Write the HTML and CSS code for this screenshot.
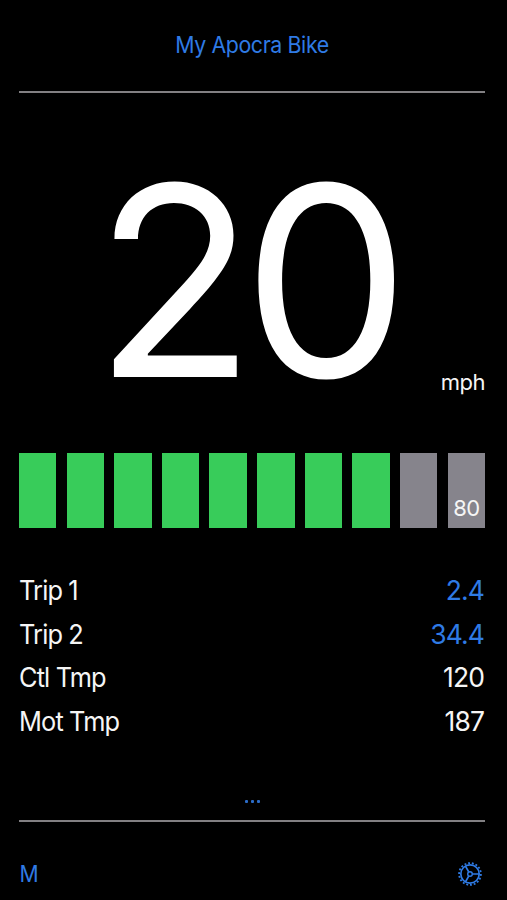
FILE: index.html
```html
<!DOCTYPE html>
<html lang="en">
<head>
    <meta charset="UTF-8">
    <meta name="viewport" content="width=device-width, initial-scale=1.0">
    <title>My Apocra Bike</title>
    <link rel="stylesheet" href="styles.css">
</head>
<body>
    <header class="header"><span class="title">My Apocra Bike</span></header>

    <!-- Speed -->
    <main class="speed">
        <div class="speed-value">20</div>
        <div class="speed-unit">mph</div>
    </main>

    <!-- Battery level -->
    <div class="battery">
        <div class="cell full"></div>
        <div class="cell full"></div>
        <div class="cell full"></div>
        <div class="cell full"></div>
        <div class="cell full"></div>
        <div class="cell full"></div>
        <div class="cell full"></div>
        <div class="cell full"></div>
        <div class="cell"></div>
        <div class="cell"><span class="percent">80</span></div>
    </div>

    <!-- Stats -->
    <div class="stats">
        <div class="row"><span class="label">Trip 1</span><span class="value link">2.4</span></div>
        <div class="row"><span class="label">Trip 2</span><span class="value link">34.4</span></div>
        <div class="row"><span class="label">Ctl Tmp</span><span class="value">120</span></div>
        <div class="row"><span class="label">Mot Tmp</span><span class="value">187</span></div>
    </div>

    <div class="more"><i></i><i></i><i></i></div>

    <footer class="footer">
        <span class="mode">M</span>
        <svg class="gear" viewBox="0 0 26 26" width="26" height="26" fill="none" stroke="currentColor">
            <circle cx="13" cy="13" r="10.9" stroke-width="1.8" pathLength="180" stroke-dasharray="5 5"/>
            <circle cx="13" cy="13" r="9.2" stroke-width="1.7"/>
            <circle cx="13" cy="13" r="2.3" stroke-width="1.4"/>
            <path d="M15.3 13H22.2M11.8 11L8.4 5M11.8 15L8.4 21" stroke-width="1.6"/>
        </svg>
    </footer>
</body>
</html>
```
FILE: styles.css
```css
body {
    font-family: Inter, "Liberation Sans", sans-serif;
    background-color: #000;
    color: #f5f5f5;
    margin: 0;
    padding: 0 22px 0 19px;
    height: 900px;
    box-sizing: border-box;
    overflow: hidden;
    display: flex;
    flex-direction: column;
}

/* Header */
.header {
    height: 93px;
    border-bottom: 2px solid #828083;
    box-sizing: border-box;
    padding-top: 30px;
    line-height: 30px;
    text-align: center;
    font-size: 22.5px;
    letter-spacing: -0.4px;
    color: #2f7be5;
}

.title {
    display: inline-block;
    transform: scaleX(0.948);
}

/* Speed */
.speed {
    height: 360px;
    display: flex;
    justify-content: space-between;
}

.speed-value {
    margin: 28px 0 0 75px;
    font-size: 265px;
    line-height: 320px;
    letter-spacing: -13px;
    color: #fff;
    white-space: nowrap;
}

.speed-unit {
    margin-top: 274px;
    height: 30px;
    line-height: 30px;
    font-size: 22px;
    letter-spacing: -0.5px;
}

/* Battery */
.battery {
    display: grid;
    grid-template-columns: repeat(10, 1fr);
    gap: 10.2px;
    height: 75px;
}

.cell {
    background-color: #86848c;
    display: flex;
    align-items: flex-end;
    justify-content: center;
}

.full {
    background-color: #38cc5a;
}

.percent {
    font-size: 22px;
    line-height: 30px;
    letter-spacing: -0.7px;
    margin-bottom: 5px;
}

/* Stats */
.stats {
    margin-top: 41px;
}

.row {
    display: flex;
    justify-content: space-between;
    height: 43.6px;
    line-height: 43.6px;
    font-size: 26.5px;
    letter-spacing: -0.9px;
}

.label {
    transform: scaleX(0.957);
    transform-origin: left;
}

.value {
    margin-right: 1px;
}

.link {
    color: #2f7be5;
}

/* Page dots */
.more {
    display: flex;
    justify-content: center;
    gap: 3px;
    margin-top: 57px;
    height: 20px;
}

.more i {
    width: 3px;
    height: 3px;
    border-radius: 1px;
    background-color: #2b6cc8;
}

/* Footer */
.footer {
    border-top: 2px solid #828083;
    display: flex;
    justify-content: space-between;
    align-items: flex-start;
    color: #2f7be5;
}

.mode {
    font-size: 22.5px;
    line-height: 30px;
    margin-top: 37px;
    transform: scaleX(0.94);
}

.gear {
    margin: 39px 2px 0 0;
}
```
